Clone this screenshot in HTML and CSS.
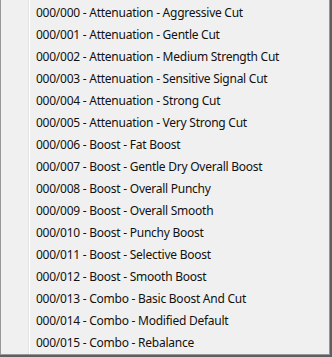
FILE: index.html
```html
<!DOCTYPE html>
<html>
<head>
<meta charset="utf-8">
<link rel="stylesheet" href="styles.css">
</head>
<body>
<div class="frame">
  <div class="menu">
    <div class="gutter"></div>
    <ul class="items">
      <li>000/000 - Attenuation - Aggressive Cut</li>
      <li>000/001 - Attenuation - Gentle Cut</li>
      <li>000/002 - Attenuation - Medium Strength Cut</li>
      <li>000/003 - Attenuation - Sensitive Signal Cut</li>
      <li>000/004 - Attenuation - Strong Cut</li>
      <li>000/005 - Attenuation - Very Strong Cut</li>
      <li>000/006 - Boost - Fat Boost</li>
      <li>000/007 - Boost - Gentle Dry Overall Boost</li>
      <li>000/008 - Boost - Overall Punchy</li>
      <li>000/009 - Boost - Overall Smooth</li>
      <li>000/010 - Boost - Punchy Boost</li>
      <li>000/011 - Boost - Selective Boost</li>
      <li>000/012 - Boost - Smooth Boost</li>
      <li>000/013 - Combo - Basic Boost And Cut</li>
      <li>000/014 - Combo - Modified Default</li>
      <li>000/015 - Combo - Rebalance</li>
    </ul>
  </div>
</div>
</body>
</html>
```
FILE: styles.css
```css
html, body {
  margin: 0;
  padding: 0;
  background: #ffffff;
}
.frame {
  width: 332px;
  height: 357px;
  box-sizing: border-box;
  padding: 0 2px 2px 0;
  background: #5f5f5f;
  display: flex;
}
.menu {
  flex: 1;
  display: flex;
  background: #f0f0f0;
  border-left: 1px solid #979797;
  border-right: 1px solid #979797;
  border-bottom: 1px solid #979797;
  box-sizing: border-box;
}
.gutter {
  width: 27px;
  flex: none;
  border-right: 1px solid #e2e3e3;
  box-shadow: 1px 0 0 #ffffff;
  margin-right: 1px;
}
.items {
  list-style: none;
  margin: 0;
  padding: 2px 0 0 6px;
  font-family: "Noto Sans", "Open Sans", sans-serif;
  font-size: 12px;
  letter-spacing: -0.25px;
  color: #111111;
}
.items li {
  height: 22px;
  line-height: 22px;
  white-space: nowrap;
}
```
